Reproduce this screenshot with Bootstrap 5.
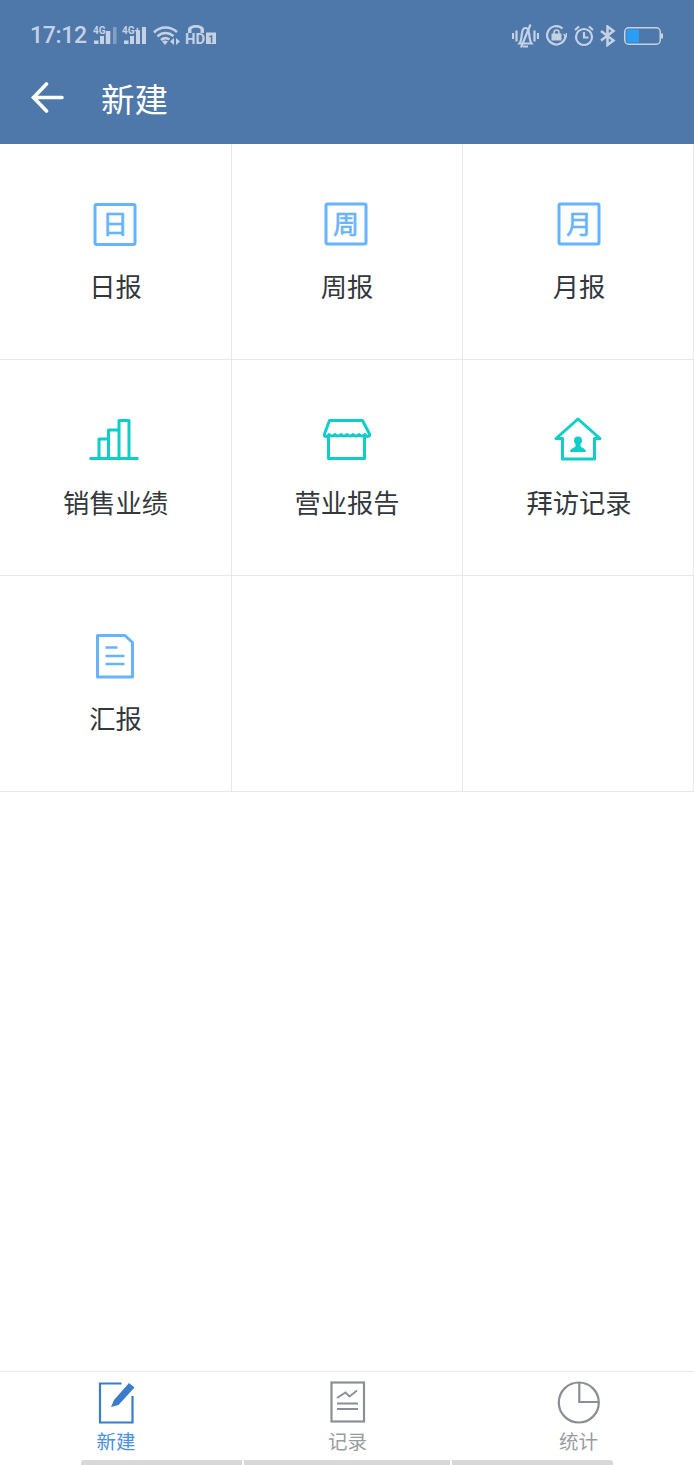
<!DOCTYPE html>
<html lang="zh-CN">
<head>
    <meta charset="UTF-8">
    <meta name="viewport" content="width=device-width, initial-scale=1.0">
    <title>新建</title>
    <link href="https://cdn.jsdelivr.net/npm/bootstrap@5.3.0/dist/css/bootstrap.min.css" rel="stylesheet">
    <style>
        html, body {
            height: 100%;
        }
        body {
            background-color: #fff;
            font-family: "Noto Sans CJK SC", "Liberation Sans", sans-serif;
        }
        svg {
            display: block;
            flex-shrink: 0;
        }
        .app-top {
            height: 144px;
            background-color: #4e77aa;
            padding-top: 24px;
        }
        .status-row {
            height: 24px;
            padding: 0 31px 0 30px;
            color: #c5d2e4;
        }
        .status-time {
            font-family: Roboto, "Liberation Sans", sans-serif;
            font-size: 23px;
            font-weight: 500;
            line-height: 24px;
            letter-spacing: -.3px;
            margin-right: 6px;
        }
        .status-txt {
            font-family: Roboto, "Liberation Sans", sans-serif;
            font-weight: 700;
            fill: #c5d2e4;
        }
        .status-gap {
            margin-left: 7px;
        }
        .title-row {
            height: 78px;
            margin-top: 11px;
            padding-left: 31px;
        }
        .title-text {
            margin-left: 37px;
            font-size: 33.5px;
            line-height: 1;
            color: #fff;
        }
        .tile-grid {
            display: grid;
            grid-template-columns: 232px 231px 231px;
        }
        .tile-cell {
            height: 216px;
            padding-top: 50px;
            border-right: 1px solid #e8e8e8;
            border-bottom: 1px solid #e8e8e8;
        }
        .tile-end {
            padding-left: 2px;
        }
        .tile-ico {
            margin-left: -2px;
        }
        .tile-label {
            margin-top: 14px;
            font-size: 26.3px;
            line-height: 36px;
            color: #33383d;
        }
        .ico-txt {
            font-family: "Noto Sans CJK SC", sans-serif;
            font-size: 26px;
            fill: #66b4ff;
            stroke: #66b4ff;
            stroke-width: .6px;
            text-anchor: middle;
        }
        .tab-bar {
            border-top: 1px solid #e8e8e8;
            padding-top: 9px;
        }
        .tab-label {
            margin-top: 1px;
            font-size: 19.5px;
            line-height: 30px;
            color: #999c9f;
        }
        .tab-label-on {
            color: #4a90dc;
        }
        .gesture-row {
            margin-top: 4px;
            padding-left: 81px;
            gap: 2px;
        }
        .gesture-seg {
            height: 5px;
            background-color: #d8d8d8;
        }
        .gesture-a {
            width: 161px;
            border-radius: 3px 0 0 0;
        }
        .gesture-b {
            width: 206px;
        }
        .gesture-c {
            width: 161px;
            border-radius: 0 3px 0 0;
        }
    </style>
</head>
<body class="d-flex flex-column">
    <header class="app-top">
        <div class="status-row d-flex align-items-center">
            <span class="status-time">17:12</span>
            <!-- signal 1 -->
            <svg width="25" height="22" viewBox="0 0 25 22" fill="#c5d2e4">
                <text x="0" y="8.500" class="status-txt" font-size="10">4G</text>
                <rect x="1" y="15.500" width="4.500" height="3.500"/>
                <rect x="7" y="11" width="4" height="8"/>
                <rect x="12.800" y="6" width="4.500" height="13"/>
                <rect x="20" y="2" width="3.500" height="17" opacity=".45"/>
            </svg>
            <!-- signal 2 -->
            <svg class="ms-1" width="27" height="22" viewBox="0 0 27 22" fill="#c5d2e4">
                <text x="0" y="8.500" class="status-txt" font-size="10">4G+</text>
                <rect x="2" y="15.500" width="4.500" height="3.500"/>
                <rect x="8" y="11" width="4" height="8"/>
                <rect x="14" y="6" width="4" height="13"/>
                <rect x="20" y="2" width="4" height="17"/>
            </svg>
            <!-- wifi -->
            <svg class="ms-1" width="28" height="22" viewBox="0 0 28 22" fill="none" stroke="#c5d2e4" stroke-width="2.500">
                <path d="M1 7.500C7.500 1 17 1 24 7"/>
                <path d="M4.500 11.500C9 6.800 15.500 6.800 20.500 11"/>
                <path d="M8 15C10.500 12.800 14 12.800 16.500 14.500"/>
                <path d="M12 20l-3-3.500c2-1.300 4-1.300 6 0z" fill="#c5d2e4" stroke="none"/>
                <path d="M21 13v7l-4-3.500zM23 13v7l4-3.500z" fill="#c5d2e4" stroke="none"/>
            </svg>
            <!-- hd -->
            <svg class="ms-1" width="32" height="24" viewBox="0 0 32 24" fill="#c5d2e4">
                <path d="M3 9V5.500C3 -.5 19 -.5 19 5.500V9h-3.500V5.500C15.500 3 6.500 3 6.500 5.500V9z"/>
                <text x="0" y="20" class="status-txt" font-size="15" textLength="20" lengthAdjust="spacingAndGlyphs">HD</text>
                <path d="M21 8.500h10V20H21z"/>
                <text x="26" y="18.500" font-size="10" font-weight="700" fill="#4e77aa" text-anchor="middle" font-family="Roboto, sans-serif">1</text>
            </svg>

            <!-- right side -->
            <svg class="ms-auto" width="27" height="24" viewBox="0 0 27 24" fill="none" stroke="#c5d2e4" stroke-width="2.200">
                <path d="M1 9v6M4.500 6.500v11M22.500 6.500v11M26 9v6"/>
                <path d="M7.500 19.500C9.500 17 9.500 12 10 9c.5-3.500 1.800-5 3.500-5s3 1.500 3.500 5c.5 3 .5 8 2.500 10.500z"/>
                <path d="M11 22.500h5M18.500 .5L9 23.500"/>
            </svg>
            <svg class="status-gap" width="21" height="22" viewBox="0 0 21 22" fill="none" stroke="#c5d2e4" stroke-width="2.200">
                <path d="M19.500 10.500A9.200 9.200 0 1 1 16.500 3.500"/>
                <path d="M17.500 9l2.500 2.500L20.500 8" stroke-width="1.400"/>
                <rect x="5.500" y="8.500" width="10" height="7" fill="#c5d2e4" stroke="none"/>
                <path d="M8 9V7.500c0-3.200 5-3.200 5 0V9" stroke-width="1.500"/>
            </svg>
            <svg class="status-gap" width="20" height="22" viewBox="0 0 20 22" fill="none" stroke="#c5d2e4" stroke-width="2.200">
                <circle cx="10" cy="12" r="8"/>
                <path d="M10 7v5.500h4.500"/>
                <path d="M1 5l4-3.500M19 5l-4-3.500"/>
            </svg>
            <svg class="ms-1" width="18" height="22" viewBox="0 0 18 22" fill="none" stroke="#c5d2e4" stroke-width="2.500">
                <path d="M3 6l12.500 9.500-6 4.500V1.500l6 4.500L3 15.500"/>
            </svg>
            <svg class="ms-2" width="39" height="20" viewBox="0 0 39 20" fill="none">
                <rect x=".75" y="1.750" width="35.500" height="16.500" rx="4" stroke="#c5d2e4" stroke-width="1.500"/>
                <path d="M4 3.500h11v13H4a2 2 0 0 1-1.500-1.500v-10a2 2 0 0 1 1.500-1.500z" fill="#2a9df4"/>
                <rect x="37" y="7.500" width="2" height="5" fill="#c5d2e4"/>
            </svg>
        </div>
        <div class="title-row d-flex align-items-center">
            <svg width="33" height="32" viewBox="0 0 33 32" fill="none" stroke="#fff" stroke-width="3.600" stroke-linecap="round">
                <path d="M3 15.500h28M15.500 2L2.500 15.500 15.500 29"/>
            </svg>
            <span class="title-text">新建</span>
        </div>
    </header>

    <main class="flex-grow-1">
        <div class="tile-grid">
            <div class="tile-cell d-flex flex-column align-items-center">
                <svg class="tile-ico" width="60" height="60" viewBox="0 0 60 60" fill="none" stroke="#66b4ff" stroke-width="3">
                    <rect x="10" y="10.500" width="40" height="40" rx="1.500"/>
                    <text x="30" y="40" class="ico-txt">日</text>
                </svg>
                <div class="tile-label">日报</div>
            </div>
            <div class="tile-cell d-flex flex-column align-items-center">
                <svg class="tile-ico" width="60" height="60" viewBox="0 0 60 60" fill="none" stroke="#66b4ff" stroke-width="3">
                    <rect x="10" y="10" width="40" height="40" rx="1.500"/>
                    <text x="30" y="39.500" class="ico-txt">周</text>
                </svg>
                <div class="tile-label">周报</div>
            </div>
            <div class="tile-cell tile-end d-flex flex-column align-items-center">
                <svg width="60" height="60" viewBox="0 0 60 60" fill="none" stroke="#66b4ff" stroke-width="3">
                    <rect x="10" y="10" width="40" height="40" rx="1.500"/>
                    <text x="30" y="39.500" class="ico-txt">月</text>
                </svg>
                <div class="tile-label">月报</div>
            </div>

            <div class="tile-cell d-flex flex-column align-items-center">
                <svg class="tile-ico" width="60" height="60" viewBox="0 0 60 60" fill="none" stroke="#0fcdc8" stroke-width="3" stroke-linejoin="round">
                    <path d="M4.500 48.500h49"/>
                    <path d="M14 48.500V29h9.500v19.500"/>
                    <path d="M23.500 29v-9h10.500v28.500"/>
                    <path d="M34 20V10.500h10v38"/>
                </svg>
                <div class="tile-label">销售业绩</div>
            </div>
            <div class="tile-cell d-flex flex-column align-items-center">
                <svg class="tile-ico" width="60" height="60" viewBox="0 0 60 60" fill="none" stroke="#0fcdc8" stroke-width="3" stroke-linejoin="round">
                    <path d="M13.500 10.500h33L53.500 24c.5 1.500 0 2.500-1.500 2.500-1.500 0-2.500-.5-3-2-1 2-5 2-6 0-1 2-5 2-6 0-1 2-5 2-6 0-1 2-5 2-6 0-1 2-5 2-6 0-1 2-5 2-6 0-.5 1.500-1.500 2-3 2s-2-1-1.500-2.500z"/>
                    <path d="M12.500 27v21.500h36V27"/>
                </svg>
                <div class="tile-label">营业报告</div>
            </div>
            <div class="tile-cell tile-end d-flex flex-column align-items-center">
                <svg class="tile-ico" width="60" height="60" viewBox="0 0 60 60" fill="none" stroke="#0fcdc8" stroke-width="3" stroke-linejoin="round">
                    <path d="M30 9L8 28.500h6.500v20.500h32V28.500H52z"/>
                    <circle cx="30" cy="30.500" r="4" fill="#0fcdc8" stroke="none"/>
                    <path d="M27.500 33h5v3.500c1 1 5 1.500 5.500 5.500H22c.5-4 4.500-4.500 5.500-5.500z" fill="#0fcdc8" stroke="none"/>
                </svg>
                <div class="tile-label">拜访记录</div>
            </div>

            <div class="tile-cell d-flex flex-column align-items-center">
                <svg class="tile-ico" width="60" height="60" viewBox="0 0 60 60" fill="none" stroke="#66b4ff" stroke-width="3" stroke-linejoin="round">
                    <path d="M12.500 9.500H40L47.500 16.500V51H12.500z"/>
                    <path d="M20.500 21.500h12M20.500 30h19M20.500 38h19" stroke-width="2.500"/>
                </svg>
                <div class="tile-label">汇报</div>
            </div>
            <div class="tile-cell"></div>
            <div class="tile-cell"></div>
        </div>
    </main>

    <footer class="tab-bar">
        <div class="tile-grid">
            <div class="d-flex flex-column align-items-center">
                <svg width="44" height="44" viewBox="0 0 44 44" fill="none" stroke="#3a7cc9" stroke-width="2.200">
                    <path d="M27.500 2.500H6v39h32.500V15"/>
                    <path d="M17 26l3-7L35 2l5.500 4.500L24.500 24z" fill="#3a7cc9" stroke="none"/>
                </svg>
                <div class="tab-label tab-label-on">新建</div>
            </div>
            <div class="d-flex flex-column align-items-center">
                <svg width="44" height="44" viewBox="0 0 44 44" fill="none" stroke="#8a8f94" stroke-width="2.200">
                    <rect x="5.500" y="1.500" width="32.500" height="39"/>
                    <path d="M11 17l8.500-5.500 4 4L31 9.500" stroke-width="1.800"/>
                    <path d="M11 22.500h21M11 28h21" stroke-width="1.800"/>
                </svg>
                <div class="tab-label">记录</div>
            </div>
            <div class="d-flex flex-column align-items-center">
                <svg width="44" height="44" viewBox="0 0 44 44" fill="none" stroke="#8a8f94" stroke-width="2.200">
                    <circle cx="21.800" cy="21.500" r="20"/>
                    <path d="M22.300 1.500v19.500h19.500"/>
                </svg>
                <div class="tab-label">统计</div>
            </div>
        </div>
        <div class="gesture-row d-flex">
            <div class="gesture-seg gesture-a"></div>
            <div class="gesture-seg gesture-b"></div>
            <div class="gesture-seg gesture-c"></div>
        </div>
    </footer>

    <script src="https://cdn.jsdelivr.net/npm/bootstrap@5.3.0/dist/js/bootstrap.bundle.min.js"></script>
</body>
</html>
